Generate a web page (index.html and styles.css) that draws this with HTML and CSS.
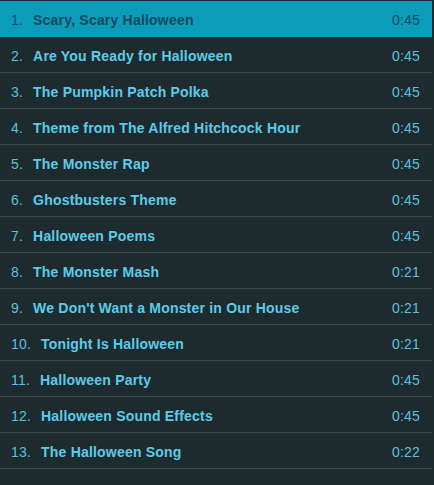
FILE: index.html
```html
<!DOCTYPE html>
<html>
<head>
<meta charset="utf-8">
<link rel="stylesheet" href="styles.css">
</head>
<body>
<ol class="tracks">
  <li class="track active"><span class="num">1.</span><span class="title">Scary, Scary Halloween</span><span class="time">0:45</span></li>
  <li class="track"><span class="num">2.</span><span class="title">Are You Ready for Halloween</span><span class="time">0:45</span></li>
  <li class="track"><span class="num">3.</span><span class="title">The Pumpkin Patch Polka</span><span class="time">0:45</span></li>
  <li class="track"><span class="num">4.</span><span class="title">Theme from The Alfred Hitchcock Hour</span><span class="time">0:45</span></li>
  <li class="track"><span class="num">5.</span><span class="title">The Monster Rap</span><span class="time">0:45</span></li>
  <li class="track"><span class="num">6.</span><span class="title">Ghostbusters Theme</span><span class="time">0:45</span></li>
  <li class="track"><span class="num">7.</span><span class="title">Halloween Poems</span><span class="time">0:45</span></li>
  <li class="track"><span class="num">8.</span><span class="title">The Monster Mash</span><span class="time">0:21</span></li>
  <li class="track"><span class="num">9.</span><span class="title">We Don't Want a Monster in Our House</span><span class="time">0:21</span></li>
  <li class="track"><span class="num">10.</span><span class="title">Tonight Is Halloween</span><span class="time">0:21</span></li>
  <li class="track"><span class="num">11.</span><span class="title">Halloween Party</span><span class="time">0:45</span></li>
  <li class="track"><span class="num">12.</span><span class="title">Halloween Sound Effects</span><span class="time">0:45</span></li>
  <li class="track"><span class="num">13.</span><span class="title">The Halloween Song</span><span class="time">0:22</span></li>
</ol>
</body>
</html>
```

FILE: styles.css
```css
html, body {
  margin: 0;
  padding: 0;
  background: #1d2b2e;
  height: 100%;
}
body {
  font-family: "Liberation Sans", Arial, sans-serif;
  font-size: 14px;
  color: #5ccbea;
}
.tracks {
  list-style: none;
  margin: 0;
  padding: 1px 2px 0 0;
}
.track {
  display: flex;
  align-items: center;
  height: 35px;
  box-sizing: border-box;
  height: 36px;
  border-bottom: 1px solid #3a4c4e;
  padding: 2px 12px 0 11px;
}
.num {
  color: #5bc0de;
  margin-right: 10px;
  letter-spacing: 0.2px;
}
.title {
  flex: 1;
  font-weight: bold;
  letter-spacing: 0.2px;
}
.time {
  color: #5bc0de;
  letter-spacing: 0.2px;
}
.track.active {
  background: #0a9cb9;
  color: #0e4a60;
  border-bottom-color: #0a9cb9;
}
.track.active .num,
.track.active .time {
  color: #0e4a60;
}
```
